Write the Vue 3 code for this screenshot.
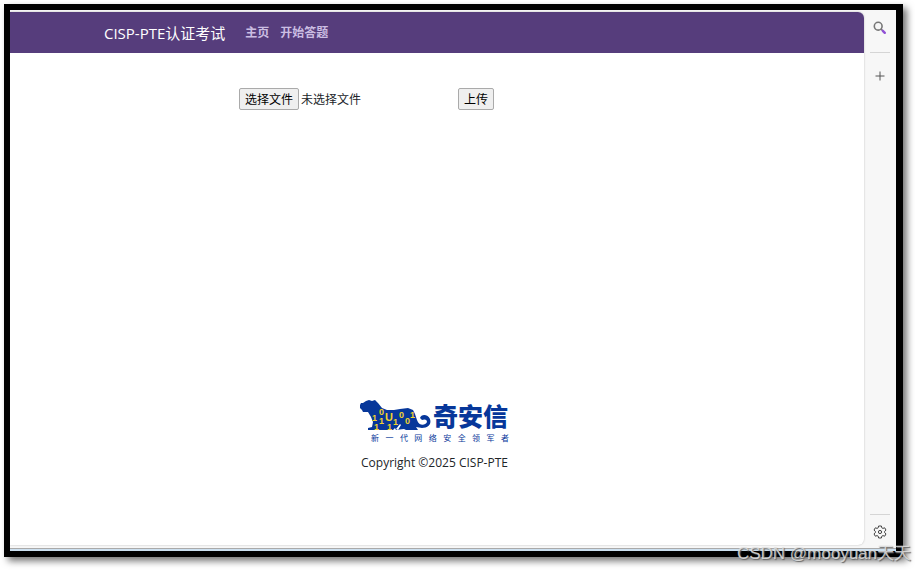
<template>
  <div class="desktop">
    <div class="window">
      <div class="workspace">
        <main class="page">
          <nav class="navbar">
            <a class="brand" href="#">CISP-PTE认证考试</a>
            <a v-for="link in links" :key="link" class="nav-link" href="#">{{ link }}</a>
          </nav>
          <form class="upload" @submit.prevent>
            <div class="picker">
              <button type="button" class="btn" @click="fileInput.click()">选择文件</button>
              <label for="file">{{ fileName }}</label>
              <input id="file" ref="fileInput" type="file" hidden @change="handleChange" />
            </div>
            <button type="submit" class="btn">上传</button>
          </form>
          <footer class="footer">
            <div class="logo">
              <div class="logo-row">
                <svg class="tiger" viewBox="0 0 72 32" aria-hidden="true">
                  <path
                    fill="#07379a"
                    d="M0 5L1 3L3 3L6 1L9 0L12 1L15 0L18 3L22 8L27 10L34 10L40 9L48 8L53 10L55 14L57 20C59 26 65 26 67 22C67 19 64 19 62 20L60 18C61 14 68 14 70 19C72 25 67 28 62 28L56 27L58 30L46 30L44 29L36 30L35 28L33 30L8 30L8 28L12 27L13 22L11 17L8 12L3 12L2 10L0 8Z"
                  />
                  <path fill="#fff" d="M36 29l4-5 1 1-3 5z" />
                  <g class="bits">
                    <text x="12" y="21">1</text>
                    <text x="19" y="15">0</text>
                    <text x="19" y="24">1</text>
                    <text x="14" y="30">1</text>
                    <text x="25" y="21" class="big">U</text>
                    <text x="27" y="30">1</text>
                    <text x="33" y="25">1</text>
                    <text x="39" y="18">0</text>
                    <text x="45" y="24">0</text>
                    <text x="50" y="18">1</text>
                  </g>
                </svg>
                <span class="logo-name">奇安信</span>
              </div>
              <div class="slogan">
                <span v-for="char in slogan" :key="char">{{ char }}</span>
              </div>
            </div>
            <p class="copyright">Copyright ©2025 CISP-PTE</p>
          </footer>
        </main>
        <aside class="sidebar">
          <button class="tool" aria-label="搜索">
            <svg width="14" height="14" viewBox="0 0 14 14" fill="none">
              <circle cx="5.2" cy="5.2" r="3.9" stroke="#777" stroke-width="1.6" />
              <path d="M8 8l2 2" stroke="#777" stroke-width="1.6" />
              <path d="M9.8 9.8l2 2" stroke="#9050d5" stroke-width="2.4" stroke-linecap="round" />
            </svg>
          </button>
          <hr />
          <button class="tool add" aria-label="添加">
            <svg width="10" height="10" viewBox="0 0 10 10">
              <path d="M5 .5v9M.5 5h9" stroke="#555" />
            </svg>
          </button>
          <hr class="last" />
          <button class="tool settings" aria-label="设置">
            <svg width="14" height="14" viewBox="0 0 14 14" fill="none" stroke="#444" stroke-linejoin="round">
              <path
                d="M5.6 1h2.8l.4 1.8 1.1.6 1.8-.6 1.3 2.3-1.4 1.3v1.2l1.4 1.3-1.3 2.3-1.8-.6-1.1.6-.4 1.8H5.6l-.4-1.8-1.1-.6-1.8.6L1 8.9l1.4-1.3V6.4L1 5.1l1.3-2.3 1.8.6 1.1-.6z"
              />
              <circle cx="7" cy="7" r="1.6" />
            </svg>
          </button>
        </aside>
      </div>
      <div class="taskbar"></div>
    </div>
    <div class="watermark">CSDN @mooyuan天天</div>
  </div>
</template>

<script setup>
import { ref } from 'vue'

const links = ['主页', '开始答题']
const slogan = [...'新一代网络安全领军者']

const fileInput = ref(null)
const fileName = ref('未选择文件')

function handleChange(event) {
  fileName.value = event.target.files[0]?.name ?? '未选择文件'
}
</script>

<style>
body {
  margin: 0;
  background: #fff;
}
</style>

<style scoped>
.desktop {
  position: relative;
  display: flex;
  box-sizing: border-box;
  min-height: 100vh;
  padding: 4px 12px 13px 4px;
  overflow: hidden;
  font-family: 'Open Sans', 'Noto Sans CJK SC', sans-serif;
  font-size: 12px;
  color: #212529;
}
.window {
  flex: 1;
  display: flex;
  flex-direction: column;
  border: 6px solid #000;
  border-right-width: 7px;
  background: #f7f7f7;
  box-shadow: 4px 4px 7px rgba(0, 0, 0, 0.55);
}
.workspace {
  flex: 1;
  display: flex;
}
.page {
  flex: 1;
  display: flex;
  flex-direction: column;
  margin-top: 2px;
  overflow: hidden;
  border-radius: 0 6px 6px 0;
  background: #fff;
  box-shadow: 0 0 2px rgba(0, 0, 0, 0.25);
}
.navbar {
  display: flex;
  align-items: center;
  height: 41px;
  padding-left: 11%;
  background: #563d7c;
}
.navbar a {
  text-decoration: none;
  white-space: nowrap;
}
.brand {
  margin-right: 20px;
  font-size: 15px;
  line-height: 20px;
  color: #fff;
}
.nav-link {
  margin-right: 11px;
  font-weight: bold;
  line-height: 20px;
  color: #cbbde2;
}
.upload {
  display: flex;
  margin-top: 35px;
  padding-left: 229px;
}
.picker {
  display: flex;
  align-items: center;
  gap: 2px;
  width: 219px;
}
.btn {
  height: 22px;
  padding: 0 5px;
  border: 1px solid #aaa;
  border-radius: 2px;
  background: #efefef;
  font-family: 'Noto Sans CJK SC', sans-serif;
  font-size: 12px;
  line-height: 20px;
  color: #000;
}
.footer {
  display: flex;
  flex-direction: column;
  align-items: center;
  margin-top: auto;
  padding-right: 5px;
  padding-bottom: 73px;
}
.logo {
  width: 149px;
  color: #07379a;
}
.logo-row {
  display: flex;
  align-items: center;
  gap: 1px;
  height: 32px;
}
.tiger {
  flex: none;
  width: 72px;
  height: 32px;
}
.bits {
  fill: #f0d22c;
  font-family: 'Liberation Sans', sans-serif;
  font-size: 9px;
  font-weight: bold;
}
.bits .big {
  font-size: 11px;
}
.logo-name {
  font-size: 25px;
  font-weight: 900;
  line-height: 36px;
  white-space: nowrap;
}
.slogan {
  display: flex;
  justify-content: space-between;
  padding-left: 11px;
  font-size: 8px;
  line-height: 12px;
}
.copyright {
  margin: 10px 0 0;
  line-height: 18px;
}
.sidebar {
  display: flex;
  flex-direction: column;
  align-items: center;
  width: 32px;
}
.sidebar hr {
  width: 20px;
  margin: 0;
  border: 0;
  border-top: 1px solid #d5d5d5;
}
.sidebar .last {
  margin-top: auto;
}
.tool {
  display: grid;
  place-items: center;
  width: 32px;
  height: 42px;
  padding: 0;
  border: 0;
  background: none;
}
.add {
  height: 46px;
}
.settings {
  height: 30px;
  padding-top: 3px;
}
.tool:first-child {
  padding-bottom: 6px;
}
.taskbar {
  height: 2px;
  margin-top: 3px;
  border-top: 1px solid #a9a9a9;
  background: #cce0f0;
}
.watermark {
  position: absolute;
  right: 4px;
  bottom: 4px;
  font-family: 'Liberation Sans', 'Noto Sans CJK SC', sans-serif;
  font-size: 17px;
  line-height: 24px;
  color: rgba(225, 225, 225, 0.85);
  text-shadow: 1px 1px 1px #666;
}
</style>
